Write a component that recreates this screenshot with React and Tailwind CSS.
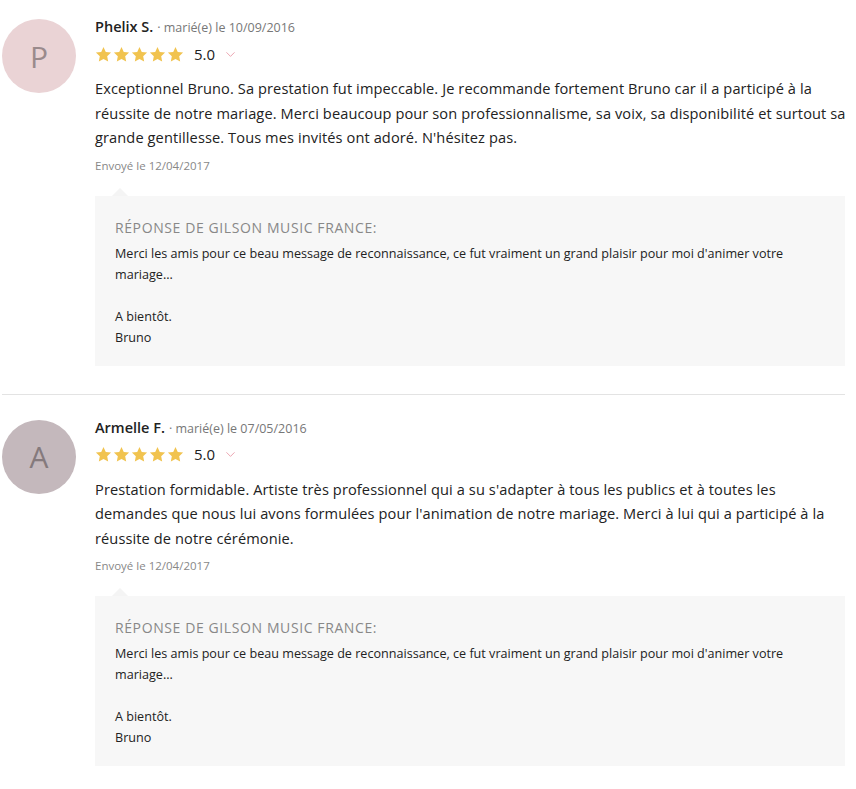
import { ChevronDown } from "lucide-react";

const reviews = [
    {
        initial: "P",
        avatar: "bg-[#ead3d5] text-[#9a8a8c]",
        name: "Phelix S.",
        date: "10/09/2016",
        text: "Exceptionnel Bruno. Sa prestation fut impeccable. Je recommande fortement Bruno car il a participé à la réussite de notre mariage. Merci beaucoup pour son professionnalisme, sa voix, sa disponibilité et surtout sa grande gentillesse. Tous mes invités ont adoré. N'hésitez pas.",
        sent: "12/04/2017",
    },
    {
        initial: "A",
        avatar: "bg-[#c4b8bc] text-[#857a7d]",
        name: "Armelle F.",
        date: "07/05/2016",
        text: "Prestation formidable. Artiste très professionnel qui a su s'adapter à tous les publics et à toutes les demandes que nous lui avons formulées pour l'animation de notre mariage. Merci à lui qui a participé à la réussite de notre cérémonie.",
        sent: "12/04/2017",
    },
];

function Star() {
    return (
        <svg viewBox="0 0 24 24" className="w-[17px] h-[17px]" fill="#f1c34f">
            <path d="M12 1.5l3.2 6.9 7.5.9-5.5 5.2 1.4 7.5L12 18.3l-6.6 3.7 1.4-7.5L1.3 9.3l7.5-.9z" />
        </svg>
    );
}

function Review({ r, top }) {
    return (
        <div className={`flex pb-[28px] ${top}`}>
            <div className="w-[95px] shrink-0 pl-[2px] pt-[5px]">
                <div className={`w-[74px] h-[74px] rounded-full flex items-center justify-center text-[30px] ${r.avatar}`}>
                    {r.initial}
                </div>
            </div>
            <div className="flex-1 pr-[11px]">
                <div className="flex items-baseline gap-[4px] leading-[26px]">
                    <span className="text-[14.5px] font-semibold text-[#222]">{r.name}</span>
                    <span className="text-[12.5px] text-[#777]">· marié(e) le {r.date}</span>
                </div>
                <div className="flex items-center mt-[1px] h-[24px]">
                    <div className="flex gap-[1px]">
                        <Star /><Star /><Star /><Star /><Star />
                    </div>
                    <span className="ml-[10px] text-[15px] text-[#222]">5.0</span>
                    <ChevronDown className="ml-[8px] w-[15px] h-[15px] text-[#e58a9a]" strokeWidth={1.25} />
                </div>
                <p className="mt-[10px] -mr-[6px] text-[14.6px] tracking-[0.1px] leading-[24.5px] text-[#222]">{r.text}</p>
                <div className="mt-[6px] text-[11.5px] text-[#888] leading-[20px]">Envoyé le {r.sent}</div>
                <div className="relative mt-[20px] bg-[#f7f7f7] px-[20px] pt-[22px] pb-[18px]">
                    <div className="absolute -top-[8px] left-[17px] w-0 h-0 border-l-[8px] border-r-[8px] border-b-[8px] border-l-transparent border-r-transparent border-b-[#f4f4f4]" />
                    <div className="text-[14px] uppercase tracking-[0.6px] text-[#888] leading-[20px]">Réponse de Gilson Music France:</div>
                    <div className="mt-[5px] text-[12.6px] leading-[21px] text-[#222]">
                        <p>Merci les amis pour ce beau message de reconnaissance, ce fut vraiment un grand plaisir pour moi d'animer votre mariage...</p>
                        <p className="mt-[21px]">A bientôt.</p>
                        <p>Bruno</p>
                    </div>
                </div>
            </div>
        </div>
    );
}

export default function App() {
    return (
        <div className="w-[856px] bg-white" style={{ fontFamily: '"Open Sans", "Liberation Sans", sans-serif' }}>
            <Review r={reviews[0]} top="pt-[14px]" />
            <div className="ml-[2px] mr-[11px] border-t border-[#e3e3e3]" />
            <Review r={reviews[1]} top="pt-[20px]" />
        </div>
    );
}
